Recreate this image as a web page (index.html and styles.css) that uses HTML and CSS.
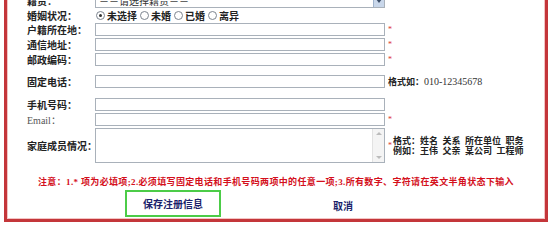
FILE: index.html
```html
<!DOCTYPE html>
<html lang="zh-CN">
<head>
<meta charset="UTF-8">
<meta name="viewport" content="width=device-width, initial-scale=1.0">
<title>注册信息</title>
<link rel="stylesheet" href="styles.css">
</head>
<body>

<div class="frame">
    <div class="row">
        <span class="label">籍贯：</span>
        <div class="select">
            <span class="select-text">－－请选择籍贯－－</span>
            <span class="select-arrow"></span>
        </div>
    </div>

    <div class="row row-radio">
        <span class="label">婚姻状况：</span>
        <label class="radio"><input type="radio" name="hy" checked>未选择</label>
        <label class="radio"><input type="radio" name="hy">未婚</label>
        <label class="radio"><input type="radio" name="hy">已婚</label>
        <label class="radio"><input type="radio" name="hy">离异</label>
    </div>

    <div class="row">
        <span class="label">户籍所在地：</span>
        <input type="text" class="field">
        <span class="star">*</span>
    </div>
    <div class="row">
        <span class="label">通信地址：</span>
        <input type="text" class="field">
        <span class="star">*</span>
    </div>
    <div class="row">
        <span class="label">邮政编码：</span>
        <input type="text" class="field">
        <span class="star">*</span>
    </div>

    <div class="row gap-a">
        <span class="label">固定电话：</span>
        <input type="text" class="field">
        <span class="hint">格式如：<span class="num">010-12345678</span></span>
    </div>

    <div class="row gap-b">
        <span class="label">手机号码：</span>
        <input type="text" class="field">
    </div>
    <div class="row">
        <span class="label label-en">Email：</span>
        <input type="text" class="field">
        <span class="star">*</span>
    </div>

    <div class="row row-area">
        <span class="label">家庭成员情况：</span>
        <div class="area">
            <textarea></textarea>
            <div class="sbar">
                <span class="sbar-up"></span>
                <span class="sbar-down"></span>
            </div>
        </div>
        <span class="star">*</span>
        <span class="hint hint-family">格式：姓名&nbsp;&nbsp;关系&nbsp;&nbsp;所在单位&nbsp;&nbsp;职务<br>例如：王伟&nbsp;&nbsp;父亲&nbsp;&nbsp;某公司&nbsp;&nbsp;工程师</span>
    </div>

    <div class="notice">注意：1.* 项为必填项;2.必须填写固定电话和手机号码两项中的任意一项;3.所有数字、字符请在英文半角状态下输入</div>

    <div class="actions">
        <button class="btn-save">保存注册信息</button>
        <a class="btn-cancel" href="#">取消</a>
    </div>
</div>

</body>
</html>
```

FILE: styles.css
```css
* { box-sizing: border-box; }
body {
    margin: 0;
    background-color: #fff;
    color: #222;
    font-family: "Liberation Serif", "Noto Sans CJK SC", serif;
    font-size: 10px;
    overflow: hidden;
}
.frame {
    margin: -20px 7px 0 4px;
    border: 3px solid #c4363a;
    box-shadow: inset 0 0 0 1px #f3c4c4;
    padding: 10px 0 2px 20px;
}
.row {
    display: flex;
    align-items: center;
    height: 15px;
}
.row-radio { height: 14px; }
.gap-a { margin-top: 7px; }
.gap-b { margin-top: 8px; }
.label {
    width: 68px;
    flex-shrink: 0;
    font-weight: bold;
    white-space: nowrap;
}
.label-en {
    font-weight: normal;
    color: #555;
}
.field {
    width: 290px;
    height: 13px;
    border: 1px solid #a9b1ba;
    padding: 0;
    margin: 0;
}
.star {
    color: #d33;
    margin-left: 3px;
    font-size: 8px;
}
.hint {
    margin-left: 3px;
    font-weight: bold;
    font-size: 9px;
    white-space: nowrap;
}
.num {
    font-weight: normal;
    font-size: 10px;
    color: #333;
}
.select {
    width: 290px;
    height: 14px;
    border: 1px solid #a9b1ba;
    display: flex;
    align-items: center;
    justify-content: space-between;
}
.select-text {
    padding-left: 3px;
    color: #333;
}
.select-arrow {
    width: 11px;
    height: 12px;
    background-color: #c9d7ea;
    border-left: 1px solid #9fb3cc;
    position: relative;
}
.select-arrow::after {
    content: "";
    position: absolute;
    left: 2px;
    top: 4px;
    border-left: 3px solid transparent;
    border-right: 3px solid transparent;
    border-top: 4px solid #3b4c66;
}
.radio {
    display: flex;
    align-items: center;
    font-weight: bold;
    margin-right: 2px;
}
.radio input {
    appearance: none;
    width: 9px;
    height: 9px;
    margin: 0 2px 0 1px;
    border: 1px solid #7d8590;
    border-radius: 50%;
    background-color: #fff;
    position: relative;
}
.radio input:checked::after {
    content: "";
    position: absolute;
    left: 2px;
    top: 2px;
    width: 3px;
    height: 3px;
    border-radius: 50%;
    background-color: #333;
}
.row-area {
    height: 37px;
}
.area {
    width: 290px;
    height: 35px;
    border: 1px solid #a9b1ba;
    display: flex;
}
.area textarea {
    flex: 1;
    border: none;
    resize: none;
    padding: 0;
    outline: none;
}
.sbar {
    width: 12px;
    background-color: #f4f4f4;
    border-left: 1px solid #e2e2e2;
    display: flex;
    flex-direction: column;
    justify-content: space-between;
    align-items: center;
    padding: 3px 0;
}
.sbar-up, .sbar-down {
    width: 0;
    height: 0;
    border-left: 3px solid transparent;
    border-right: 3px solid transparent;
}
.sbar-up { border-bottom: 3px solid #bbb; }
.sbar-down { border-top: 3px solid #bbb; }
.hint-family {
    line-height: 10px;
    margin-left: 1px;
}
.notice {
    margin: 12px 0 0 -20px;
    text-align: center;
    color: #d4101c;
    font-weight: bold;
    font-size: 9px;
    letter-spacing: 0.35px;
    line-height: 12px;
}
.actions {
    display: flex;
    align-items: center;
    padding-left: 98px;
    gap: 112px;
    margin-top: 2px;
}
.btn-save {
    width: 96px;
    height: 27px;
    background-color: #fff;
    border: 2px solid #4ccc48;
    color: #1b1f6b;
    font-family: "Noto Sans CJK SC", sans-serif;
    font-weight: bold;
    font-size: 10px;
    padding: 0;
}
.btn-cancel {
    color: #1b1f6b;
    font-weight: bold;
    text-decoration: none;
    margin-top: 3px;
}
```
